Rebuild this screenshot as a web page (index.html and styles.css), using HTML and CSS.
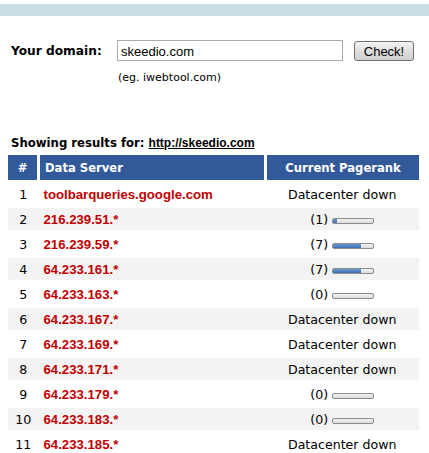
FILE: index.html
```html
<!DOCTYPE html>
<html lang="en">
<head>
  <meta charset="UTF-8" />
  <meta name="viewport" content="width=device-width, initial-scale=1.0" />
  <title>Google Pagerank Checker</title>
  <link rel="stylesheet" href="styles.css">
</head>
<body>
  <div class="topbar"></div>

  <div class="page">
    <form class="lookup" onsubmit="return false;">
      <label class="lookup-label" for="domain">Your domain:</label>
      <div class="lookup-field">
        <input type="text" id="domain" value="skeedio.com" />
        <div class="hint">(eg. iwebtool.com)</div>
      </div>
      <button type="submit">Check!</button>
    </form>

    <p class="showing">Showing results for: <a href="#">http://skeedio.com</a></p>

    <table class="results">
      <thead>
        <tr>
          <th class="num">#</th>
          <th class="server">Data Server</th>
          <th class="rank">Current Pagerank</th>
        </tr>
      </thead>
      <tbody>
        <tr><td class="num">1</td><td class="server">toolbarqueries.google.com</td><td class="rank">Datacenter down</td></tr>
        <tr><td class="num">2</td><td class="server">216.239.51.*</td><td class="rank">(1) <span class="bar"><span class="fill" style="width: 10%"></span></span></td></tr>
        <tr><td class="num">3</td><td class="server">216.239.59.*</td><td class="rank">(7) <span class="bar"><span class="fill" style="width: 70%"></span></span></td></tr>
        <tr><td class="num">4</td><td class="server">64.233.161.*</td><td class="rank">(7) <span class="bar"><span class="fill" style="width: 70%"></span></span></td></tr>
        <tr><td class="num">5</td><td class="server">64.233.163.*</td><td class="rank">(0) <span class="bar"></span></td></tr>
        <tr><td class="num">6</td><td class="server">64.233.167.*</td><td class="rank">Datacenter down</td></tr>
        <tr><td class="num">7</td><td class="server">64.233.169.*</td><td class="rank">Datacenter down</td></tr>
        <tr><td class="num">8</td><td class="server">64.233.171.*</td><td class="rank">Datacenter down</td></tr>
        <tr><td class="num">9</td><td class="server">64.233.179.*</td><td class="rank">(0) <span class="bar"></span></td></tr>
        <tr><td class="num">10</td><td class="server">64.233.183.*</td><td class="rank">(0) <span class="bar"></span></td></tr>
        <tr><td class="num">11</td><td class="server">64.233.185.*</td><td class="rank">Datacenter down</td></tr>
      </tbody>
    </table>
  </div>
</body>
</html>
```

FILE: styles.css
```css
body {
  margin: 0;
  font-family: "DejaVu Sans", Verdana, sans-serif;
  font-size: 12px;
  color: #000;
  background: #fff;
}
.topbar {
  margin-top: 4px;
  height: 12px;
  background-color: #c9dfe6;
}
.page {
  padding: 0 10px 0 8px;
}
.lookup {
  display: flex;
  align-items: flex-start;
  margin: 24px 0 0 3px;
}
.lookup-label {
  font-weight: bold;
  font-size: 12.2px;
  line-height: 23px;
  width: 106px;
}
.lookup-field {
  width: 226px;
}
.lookup-field input {
  box-sizing: border-box;
  width: 226px;
  height: 21px;
  margin: 0;
  padding: 1px 3px 0;
  border: 1px solid #a5acb2;
  font-family: "Liberation Sans", Arial, sans-serif;
  font-size: 13px;
  color: #000;
  outline: none;
}
.hint {
  margin-top: 10px;
  font-size: 11px;
  line-height: 13px;
  padding-left: 1px;
}
.lookup button {
  margin: 1px 0 0 11px;
  width: 60px;
  height: 20px;
  padding: 0;
  border: 1px solid #707070;
  border-radius: 3px;
  background: linear-gradient(#f4f4f4, #dedede 50%, #d0d0d0);
  font-family: "Liberation Sans", Arial, sans-serif;
  font-size: 13px;
  color: #000;
}
.showing {
  margin: 52px 0 5px 3px;
  font-weight: bold;
  font-size: 11.7px;
  line-height: 14px;
}
.showing a {
  font-family: "Liberation Sans", Arial, sans-serif;
  font-size: 12px;
  color: #000;
}
.results {
  width: 411px;
  border-collapse: collapse;
}
.results th {
  height: 25px;
  padding: 0 4px;
  background-color: #32599a;
  color: #fff;
  font-weight: bold;
  font-size: 11.6px;
}
.results th + th {
  border-left: 3px solid #fff;
}
.results td {
  height: 22px;
  padding: 0 3px;
  border-top: 3px solid #fff;
  font-size: 12.6px;
}
.results tbody tr:nth-child(even) td {
  background-color: #f3f3f3;
}
.results .num {
  width: 29px;
  padding: 0;
  text-align: center;
}
.results .server {
  width: 216px;
  padding: 0 3px 0 5px;
  text-align: left;
}
.results td.server {
  font-family: "Liberation Sans", Arial, sans-serif;
  font-size: 13.2px;
  font-weight: bold;
  color: #c00000;
}
.results .rank {
  text-align: center;
}
.bar {
  display: inline-block;
  box-sizing: border-box;
  width: 42px;
  height: 6px;
  border: 1px solid #8c8c8c;
  border-radius: 2px;
  background: linear-gradient(#f2f2f2, #dcdcdc);
  vertical-align: 0;
  overflow: hidden;
}
.bar .fill {
  display: block;
  height: 100%;
  background: linear-gradient(#6a98d0, #3f70b4);
}
```
